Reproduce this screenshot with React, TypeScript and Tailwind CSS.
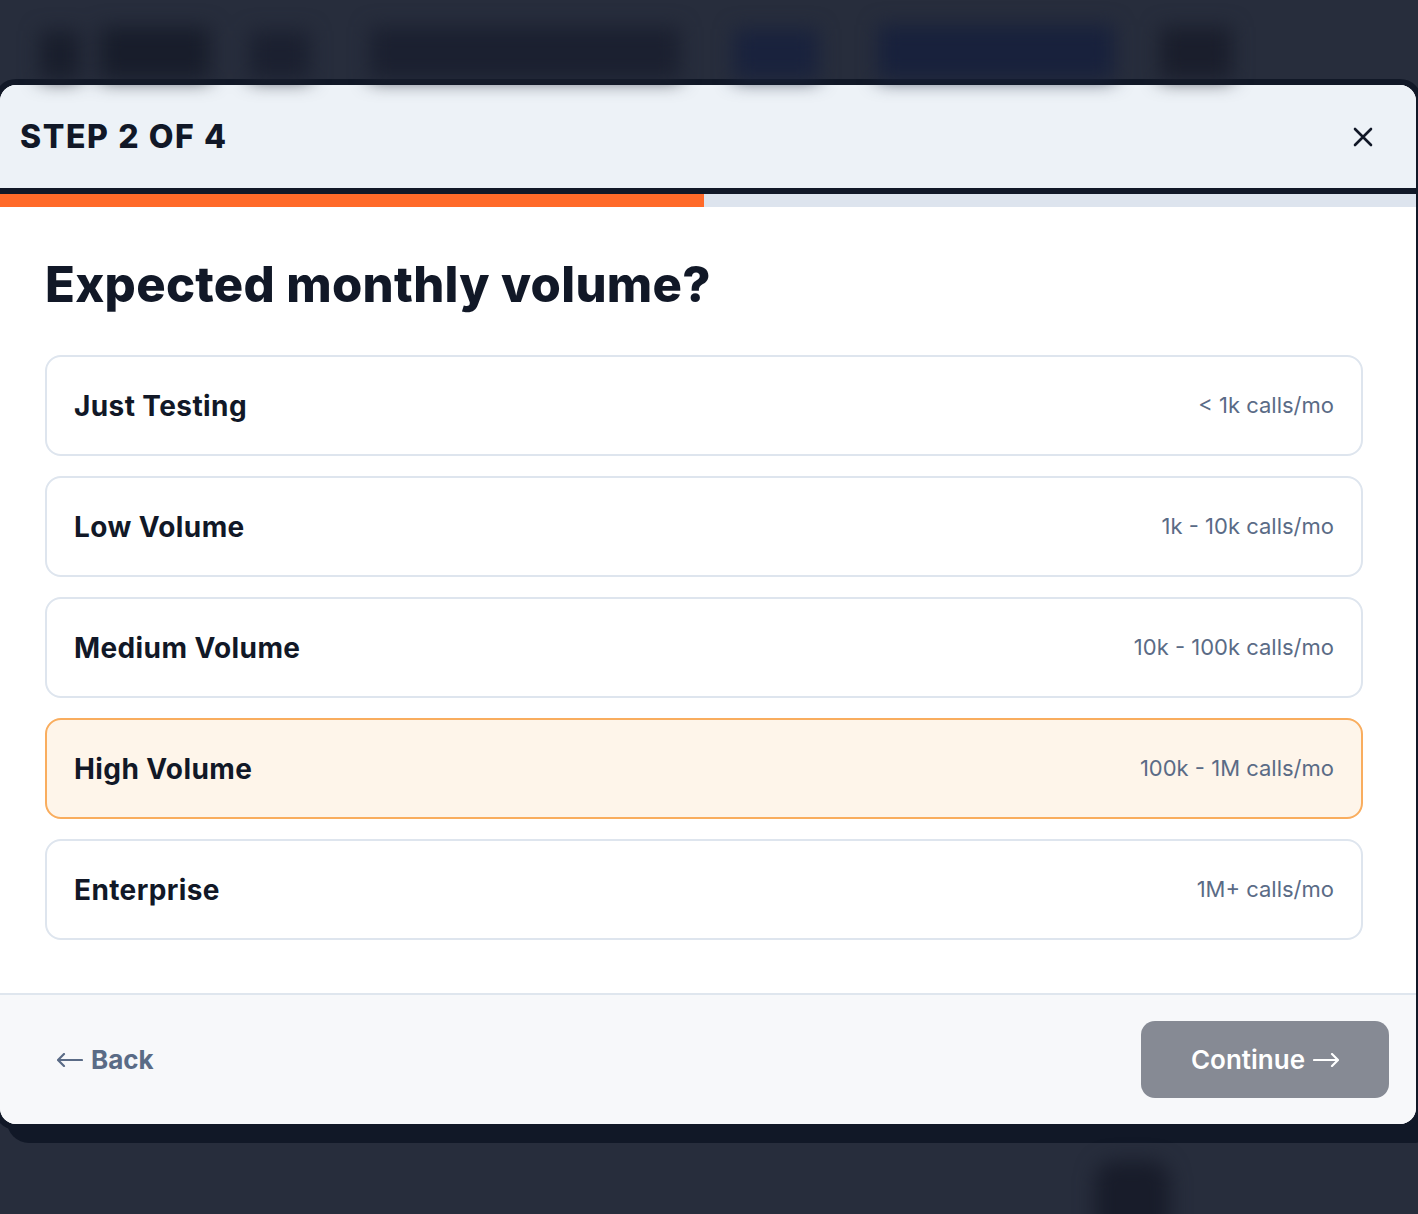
const options = [
  { label: "Just Testing", volume: "< 1k calls/mo" },
  { label: "Low Volume", volume: "1k - 10k calls/mo" },
  { label: "Medium Volume", volume: "10k - 100k calls/mo" },
  { label: "High Volume", volume: "100k - 1M calls/mo", selected: true },
  { label: "Enterprise", volume: "1M+ calls/mo" },
];

function Arrow(props: { dir: "left" | "right" }) {
  const d = props.dir === "left" ? "M1 7 H25 M7 1 L1 7 L7 13" : "M1 7 H25 M19 1 L25 7 L19 13";
  return (
    <svg width="26" height="14" viewBox="0 0 26 14" fill="none">
      <path d={d} stroke="currentColor" strokeWidth="2.2" strokeLinecap="round" strokeLinejoin="round" />
    </svg>
  );
}

function BlurredBackdropTop() {
  // blurred page content behind the overlay
  return (
    <div className="flex h-[56px] items-end blur-[10px]">
      <div className="ml-[40px] h-[48px] w-[40px] bg-[#191e2c]" />
      <div className="ml-[20px] h-[52px] w-[110px] bg-[#181d2b]" />
      <div className="ml-[40px] h-[48px] w-[60px] bg-[#1b2030]" />
      <div className="ml-[60px] h-[52px] w-[310px] bg-[#1b2030]" />
      <div className="ml-[54px] h-[50px] w-[84px] bg-[#19223d]" />
      <div className="ml-[60px] h-[54px] w-[236px] bg-[#18213c]" />
      <div className="ml-[46px] h-[52px] w-[72px] bg-[#1a1e2c]" />
    </div>
  );
}

function OptionRow(props: { label: string; volume: string; selected?: boolean }) {
  const { label, volume, selected } = props;
  return (
    <button
      type="button"
      className={
        selected
          ? "flex h-[101px] w-full items-center justify-between rounded-[16px] border-2 border-[#f9ad5e] bg-[#fef5ea] pl-[27px] pr-[27px] text-left"
          : "flex h-[101px] w-full items-center justify-between rounded-[16px] border-2 border-[#dee5ee] bg-white pl-[27px] pr-[27px] text-left"
      }
    >
      <span className="text-[28px] font-bold tracking-[0.4px] text-[#111827]">{label}</span>
      <span className="text-[22px] text-[#5a6b86]">{volume}</span>
    </button>
  );
}

export default function App() {
  return (
    <div
      className="h-[1214px] overflow-hidden bg-[#272d3c] pt-[23px]"
      style={{ fontFamily: "Inter, 'Noto Sans', sans-serif" }}
    >
      <BlurredBackdropTop />

      <div className="ml-[-6px] w-[1428px] overflow-hidden rounded-[22px] border-[6px] border-[#111827] bg-white shadow-[13px_13px_0_#111827]">
        {/* header */}
        <div className="box-content flex h-[103px] items-center justify-between border-b-[6px] border-[#111827] bg-[#edf2f7] pl-[20px] pr-[43px]">
          <h2 className="text-[32px] font-extrabold tracking-[1.6px] text-[#111827]">STEP 2 OF 4</h2>
          <svg width="20" height="20" viewBox="0 0 20 20" className="text-[#111827]">
            <path d="M2 2 L18 18 M18 2 L2 18" stroke="currentColor" strokeWidth="2.6" strokeLinecap="round" />
          </svg>
        </div>

        {/* progress */}
        <div className="h-[13px] bg-[#dde4ee]">
          <div className="h-full w-[704px] bg-[#ff6a29]" />
        </div>

        {/* body */}
        <div className="pb-[53px] pl-[45px] pr-[53px] pt-[49px]">
          <h1 className="text-[49px] font-extrabold leading-[58px] tracking-[0.3px] text-[#111827]">
            Expected monthly volume?
          </h1>
          <div className="mt-[41px] flex flex-col gap-[20px]">
            {options.map((o) => (
              <OptionRow key={o.label} label={o.label} volume={o.volume} selected={o.selected} />
            ))}
          </div>
        </div>

        {/* footer */}
        <div className="flex items-center justify-between border-t-2 border-[#dfe6ee] bg-[#f7f8fa] py-[26px] pl-[57px] pr-[27px]">
          <button type="button" className="flex items-center gap-[8px] text-[26px] font-bold text-[#5a6b86]">
            <Arrow dir="left" />
            <span>Back</span>
          </button>
          <button
            type="button"
            className="flex h-[77px] w-[248px] items-center justify-center gap-[8px] rounded-[14px] bg-[#868a94] text-[26px] font-semibold text-white"
          >
            <span>Continue</span>
            <Arrow dir="right" />
          </button>
        </div>
      </div>

      <div className="ml-[1095px] mt-[31px] h-[80px] w-[75px] rounded-[20px] bg-[#181c2a] blur-[10px]" />
    </div>
  );
}
